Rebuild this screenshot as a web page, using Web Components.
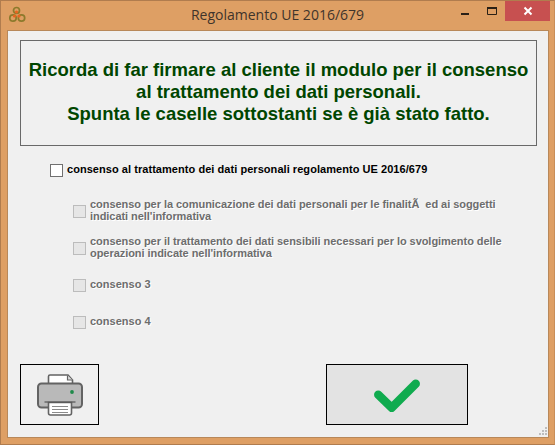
<!DOCTYPE html>
<html>
<head>
<meta charset="utf-8">
<title>Regolamento UE 2016/679</title>
<style>
	html, body { margin: 0; padding: 0; background: #de9f64; }
</style>
</head>
<body>
<app-window caption="Regolamento UE 2016/679">
	<message-box>
		Ricorda di far firmare al cliente il modulo per il consenso<br>
		al trattamento dei dati personali.<br>
		Spunta le caselle sottostanti se è già stato fatto.
	</message-box>
	<consent-list>
		<consent-check main style="height:14px;letter-spacing:.05px">consenso al trattamento dei dati personali regolamento UE 2016/679</consent-check>
		<consent-check style="height:24px;margin-top:22px;letter-spacing:-.05px">consenso per la comunicazione dei dati personali per le finalitÃ&nbsp; ed ai soggetti<br>indicati nell'informativa</consent-check>
		<consent-check style="height:24px;margin-top:13px;letter-spacing:-.05px">consenso per il trattamento dei dati sensibili necessari per lo svolgimento delle<br>operazioni indicate nell'informativa</consent-check>
		<consent-check style="height:14px;margin-top:18px">consenso 3</consent-check>
		<consent-check style="height:14px;margin-top:23px">consenso 4</consent-check>
	</consent-list>
	<div slot="actions" style="display:contents">
		<action-button style="width:79px">
			<svg width="46" height="42" viewBox="0 0 46 42">
				<path d="M11.500 10V2.500a1.500 1.500 0 0 1 1.500-1.500H31l4.500 5V10z" fill="#fff" stroke="#636363" stroke-width="1.600"/>
				<path d="M30.500 1.500v4.500h5" fill="#ddd" stroke="#636363" stroke-width="1.200"/>
				<rect x="1" y="9.500" width="44" height="24" rx="3.500" fill="#b9b9b9" stroke="#636363" stroke-width="2"/>
				<circle cx="35" cy="18" r="1.900" fill="#1f8a4a"/>
				<path d="M11.500 28.500v10.500a2 2 0 0 0 2 2h19a2 2 0 0 0 2-2V28.500z" fill="#fff" stroke="#636363" stroke-width="1.600"/>
				<path d="M7.500 28h31" stroke="#555" stroke-width="1.200" fill="none"/>
				<path d="M15 32.500h16M15 35.500h16M15 38.500h16" stroke="#8a8a8a" stroke-width="1" fill="none"/>
			</svg>
		</action-button>
		<action-button primary style="width:142px;margin-left:227px">
			<svg width="46" height="34" viewBox="0 0 46 34">
				<path d="M4.300 16.800 17.700 29.800 41.700 5.800" fill="none" stroke="#10ab4f" stroke-width="8.500" stroke-linecap="round" stroke-linejoin="round"/>
			</svg>
		</action-button>
	</div>
</app-window>

<script>
const windowTemplate = document.createElement('template');
windowTemplate.innerHTML = `
<style>
	:host {
		display: flex;
		flex-direction: column;
		box-sizing: border-box;
		width: 555px;
		height: 445px;
		background: #de9f64;
		border: 1px solid #b07c4e;
		border-right-color: #c98e58;
		font-family: 'Liberation Sans', Arial, sans-serif;
		overflow: hidden;
	}
	.titlebar {
		display: flex;
		align-items: flex-start;
		height: 29px;
		flex: none;
		position: relative;
	}
	.icon { margin: 5px 0 0 8px; }
	.caption {
		position: absolute;
		left: 0;
		right: 0;
		top: 4px;
		text-align: center;
		font: 14px/20px 'Open Sans', 'Noto Sans', sans-serif;
		color: #3f342b;
	}
	.controls {
		display: flex;
		margin-left: auto;
		margin-right: 4px;
		position: relative;
	}
	.controls span {
		display: flex;
		align-items: center;
		justify-content: center;
		height: 20px;
	}
	.min { width: 26px; }
	.max { width: 26px; }
	.close { width: 45px; background: #c75050; }
	.client {
		flex: 1;
		display: flex;
		flex-direction: column;
		margin: 0 5px 6px 6px;
		padding: 9px 11px 12px 12px;
		background: #f0f0f0;
		border: 1px solid #b8885a;
		box-sizing: border-box;
		position: relative;
		min-height: 0;
	}
	.actions {
		display: flex;
		margin-top: auto;
	}
	.grip {
		position: absolute;
		right: 0;
		bottom: 1px;
	}
</style>
<div class="titlebar">
	<svg class="icon" width="18" height="18" viewBox="0 0 18 18">
		<g fill="none" stroke="#8c7a2c" stroke-width="1.700">
			<circle cx="7.500" cy="4.500" r="3"/>
			<circle cx="4" cy="12" r="3.200"/>
			<circle cx="12.500" cy="12" r="3.200"/>
		</g>
		<circle cx="7.500" cy="6" r="1.600" fill="#e8641e"/>
		<circle cx="5.500" cy="10" r="1.600" fill="#e8641e"/>
		<circle cx="10" cy="10" r="1.600" fill="#e8641e"/>
	</svg>
	<div class="caption"></div>
	<div class="controls">
		<span class="min"><svg width="10" height="10" viewBox="0 0 10 10"><rect x="0" y="7" width="8" height="2" fill="#2a2016"/></svg></span>
		<span class="max"><svg width="10" height="10" viewBox="0 0 10 10"><path d="M.5 1.500h9v7h-9z" fill="none" stroke="#2a2016"/><rect y="1" width="10" height="2" fill="#2a2016"/></svg></span>
		<span class="close"><svg width="10" height="10" viewBox="0 0 10 10"><path d="M1.500 1.500l7 7M8.500 1.500l-7 7" stroke="#fff" stroke-width="2" fill="none"/></svg></span>
	</div>
</div>
<div class="client">
	<slot></slot>
	<div class="actions"><slot name="actions"></slot></div>
	<svg class="grip" width="9" height="9" viewBox="0 0 9 9" fill="#bdbdbd">
		<rect x="6" y="0" width="2" height="2"/>
		<rect x="3" y="3" width="2" height="2"/><rect x="6" y="3" width="2" height="2"/>
		<rect x="0" y="6" width="2" height="2"/><rect x="3" y="6" width="2" height="2"/><rect x="6" y="6" width="2" height="2"/>
	</svg>
</div>
`;

class AppWindow extends HTMLElement {
	constructor() {
		super();
		const shadow = this.attachShadow({ mode: 'open' });
		shadow.appendChild(windowTemplate.content.cloneNode(true));
		shadow.querySelector('.caption').textContent = this.getAttribute('caption');
	}
}

class MessageBox extends HTMLElement {
	constructor() {
		super();
		this.attachShadow({ mode: 'open' }).innerHTML = `
<style>
	:host {
		display: flex;
		align-items: center;
		justify-content: center;
		box-sizing: border-box;
		height: 106px;
		padding: 0 0 2px;
		border: 1px solid #696969;
		flex: none;
		text-align: center;
		color: #004600;
		font: bold 18.500px/22px 'Liberation Sans', Arial, sans-serif;
	}
</style>
<div><slot></slot></div>`;
	}
}

class ConsentList extends HTMLElement {
	constructor() {
		super();
		this.attachShadow({ mode: 'open' }).innerHTML = `
<style>
	:host {
		display: flex;
		flex-direction: column;
		margin-top: 17px;
		padding-left: 53px;
	}
</style>
<slot></slot>`;
	}
}

class ConsentCheck extends HTMLElement {
	constructor() {
		super();
		this.attachShadow({ mode: 'open' }).innerHTML = `
<style>
	:host {
		display: flex;
		align-items: center;
		gap: 4px;
		font: bold 11px/12px 'Liberation Sans', Arial, sans-serif;
		color: #6d6d6d;
		text-shadow: 1px 1px 0 #fff;
	}
	:host([main]) {
		margin-left: -23px;
		color: #000;
		text-shadow: none;
	}
	.box {
		flex: none;
		box-sizing: border-box;
		width: 13px;
		height: 13px;
		background: #e6e6e6;
		border: 1px solid #bcbcbc;
	}
	:host([main]) .box {
		background: #fff;
		border-color: #707070;
	}
	.label { margin-bottom: 2px; }
</style>
<span class="box"></span>
<span class="label"><slot></slot></span>`;
	}
}

class ActionButton extends HTMLElement {
	constructor() {
		super();
		this.attachShadow({ mode: 'open' }).innerHTML = `
<style>
	:host {
		display: flex;
		align-items: center;
		justify-content: center;
		box-sizing: border-box;
		height: 61px;
		flex: none;
		border: 1px solid #000;
	}
	:host([primary]) { background: #e3e3e3; }
</style>
<slot></slot>`;
	}
}

customElements.define('app-window', AppWindow);
customElements.define('message-box', MessageBox);
customElements.define('consent-list', ConsentList);
customElements.define('consent-check', ConsentCheck);
customElements.define('action-button', ActionButton);
</script>
</body>
</html>
